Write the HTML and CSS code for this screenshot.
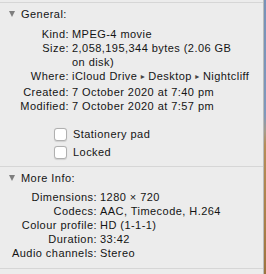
FILE: index.html
```html
<!DOCTYPE html>
<html>
<head>
<meta charset="utf-8">
<link rel="stylesheet" href="styles.css">
</head>
<body>
<div class="screen">
  <div class="panel">
    <section class="section general">
      <div class="header"><span class="tri"></span>General:</div>
      <div class="grid">
        <div class="label">Kind:</div><div class="value">MPEG-4 movie</div>
        <div class="label">Size:</div><div class="value">2,058,195,344 bytes (2.06 GB<br>on disk)</div>
        <div class="label">Where:</div><div class="value">iCloud Drive <span class="sep">▸</span> Desktop <span class="sep">▸</span> Nightcliff</div>
        <div class="label">Created:</div><div class="value">7 October 2020 at 7:40 pm</div>
        <div class="label">Modified:</div><div class="value">7 October 2020 at 7:57 pm</div>
      </div>
      <div class="checks">
        <label class="check"><span class="box"></span>Stationery pad</label>
        <label class="check"><span class="box"></span>Locked</label>
      </div>
    </section>
    <section class="section more">
      <div class="header"><span class="tri"></span>More Info:</div>
      <div class="grid wide">
        <div class="label">Dimensions:</div><div class="value">1280 × 720</div>
        <div class="label">Codecs:</div><div class="value">AAC, Timecode, H.264</div>
        <div class="label">Colour profile:</div><div class="value">HD (1-1-1)</div>
        <div class="label">Duration:</div><div class="value">33:42</div>
        <div class="label">Audio channels:</div><div class="value">Stereo</div>
      </div>
    </section>
    <div class="bottom-line"></div>
  </div>
  <div class="desktop"></div>
</div>
</body>
</html>
```

FILE: styles.css
```css
html, body {
  margin: 0;
  padding: 0;
}
body {
  width: 266px;
  height: 274px;
  overflow: hidden;
  background: #ececec;
  font-family: "Liberation Sans", Arial, sans-serif;
  font-size: 11px;
  letter-spacing: 0.45px;
  color: #141414;
}
.screen {
  display: flex;
  height: 274px;
}
.panel {
  flex: 1;
  padding-top: 2px;
  border-right: 1px solid #bcbcbc;
  background: #ececec;
}
.desktop {
  width: 2px;
  background: linear-gradient(to bottom, #7792b8 0%, #7f98bb 42%, #a59c8a 48%, #b58d58 53%, #a9804a 80%, #9c733f 100%);
}
.section {
  border-top: 1px solid #d6d6d6;
  padding-top: 4px;
}
.header {
  display: flex;
  align-items: center;
  height: 14px;
  line-height: 14px;
  padding-left: 9px;
  gap: 6px;
}
.tri {
  width: 0;
  height: 0;
  border-left: 3.5px solid transparent;
  border-right: 3.5px solid transparent;
  border-top: 6px solid #7e7e7e;
}
.grid {
  display: grid;
  grid-template-columns: 69px 1fr;
  column-gap: 3px;
  line-height: 14px;
  margin-top: 6px;
}
.grid.wide {
  grid-template-columns: 97px 1fr;
  margin-top: 5px;
}
.label {
  text-align: right;
  white-space: nowrap;
}
.value {
  white-space: nowrap;
}
.sep {
  font-family: "DejaVu Sans", sans-serif;
  font-size: 8px;
  color: #444;
  letter-spacing: 0;
  position: relative;
  top: -1px;
}
.checks {
  display: flex;
  flex-direction: column;
  margin-top: 12px;
  margin-bottom: 5px;
  padding-left: 54px;
}
.check {
  display: flex;
  align-items: center;
  gap: 6px;
  height: 18px;
}
.box {
  width: 11px;
  height: 11px;
  background: #ffffff;
  border: 0.5px solid #b0b0b0;
  border-radius: 3px;
  box-shadow: 0 0.5px 1px rgba(0,0,0,0.12);
}
.more .grid {
  margin-bottom: 8px;
}
.bottom-line {
  border-top: 1px solid #d6d6d6;
}
```
